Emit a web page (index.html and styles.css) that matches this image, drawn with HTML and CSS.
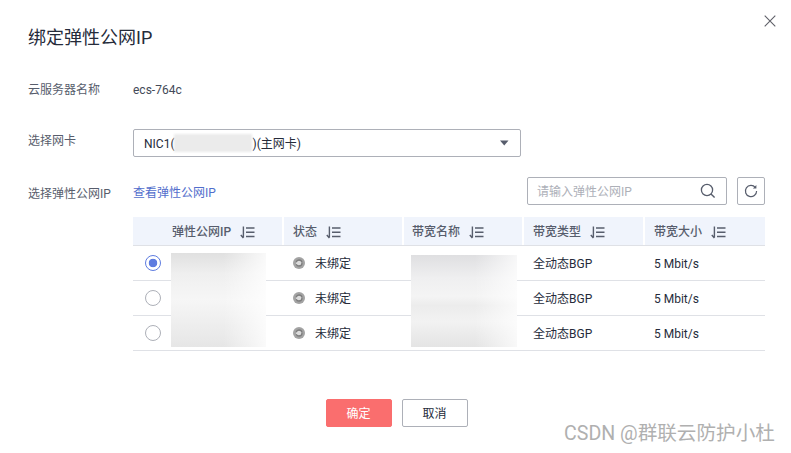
FILE: index.html
```html
<!DOCTYPE html>
<html lang="zh-CN">
<head>
<meta charset="utf-8">
<title>绑定弹性公网IP</title>
<link rel="stylesheet" href="styles.css">
</head>
<body>
<div class="dialog">
  <svg class="close" width="12" height="12" viewBox="0 0 12 12"><path d="M.7.7l10.6 10.6M11.3.7L.7 11.3" stroke="#5f6068" stroke-width="1.1" fill="none"/></svg>
  <h1 class="title">绑定弹性公网IP</h1>
  <div class="row row-name">
    <div class="label">云服务器名称</div>
    <div class="value">ecs-764c</div>
  </div>
  <div class="row row-nic">
    <div class="label label-nic">选择网卡</div>
    <div class="select">
      <span>NIC1(<span class="nic-gap"></span>)(主网卡)</span>
      <svg class="caret" width="9" height="6" viewBox="0 0 9 6"><path d="M0 .5h8.5L4.25 5.5z" fill="#575d6c"/></svg>
      <div class="blur blur-nic"></div>
    </div>
  </div>
  <div class="row row-eip">
    <div class="label label-eip">选择弹性公网IP</div>
    <div class="eip-main">
      <div class="toolbar">
        <a class="link">查看弹性公网IP</a>
        <div class="tools">
          <div class="search">
            <span class="placeholder">请输入弹性公网IP</span>
            <svg class="search-icon" width="16" height="16" viewBox="0 0 16 16"><circle cx="7" cy="7" r="5.6" stroke="#575d6c" stroke-width="1.3" fill="none"/><path d="M11 11l3.6 3.6" stroke="#575d6c" stroke-width="1.4" fill="none"/></svg>
          </div>
          <div class="refresh">
            <svg width="14" height="14" viewBox="0 0 14 14"><path d="M11.4 3.6A5.6 5.6 0 1 0 12.6 7" stroke="#575d6c" stroke-width="1.2" fill="none"/><path d="M12.4 1v3.6H8.9z" fill="#575d6c"/></svg>
          </div>
        </div>
      </div>
      <div class="table">
        <div class="tr th">
          <div class="cell c1">弹性公网IP<svg class="sort" width="15" height="13" viewBox="0 0 15 13"><path d="M3.4 .5v11M.8 9l2.6 3" stroke="#575d6c" stroke-width="1.4" fill="none"/><path d="M6 2h8.5M6 6.2h8.5M6 10.4h8.5" stroke="#575d6c" stroke-width="1.5"/></svg></div>
          <div class="cell">状态<svg class="sort" width="15" height="13" viewBox="0 0 15 13"><path d="M3.4 .5v11M.8 9l2.6 3" stroke="#575d6c" stroke-width="1.4" fill="none"/><path d="M6 2h8.5M6 6.2h8.5M6 10.4h8.5" stroke="#575d6c" stroke-width="1.5"/></svg></div>
          <div class="cell">带宽名称<svg class="sort" width="15" height="13" viewBox="0 0 15 13"><path d="M3.4 .5v11M.8 9l2.6 3" stroke="#575d6c" stroke-width="1.4" fill="none"/><path d="M6 2h8.5M6 6.2h8.5M6 10.4h8.5" stroke="#575d6c" stroke-width="1.5"/></svg></div>
          <div class="cell">带宽类型<svg class="sort" width="15" height="13" viewBox="0 0 15 13"><path d="M3.4 .5v11M.8 9l2.6 3" stroke="#575d6c" stroke-width="1.4" fill="none"/><path d="M6 2h8.5M6 6.2h8.5M6 10.4h8.5" stroke="#575d6c" stroke-width="1.5"/></svg></div>
          <div class="cell">带宽大小<svg class="sort" width="15" height="13" viewBox="0 0 15 13"><path d="M3.4 .5v11M.8 9l2.6 3" stroke="#575d6c" stroke-width="1.4" fill="none"/><path d="M6 2h8.5M6 6.2h8.5M6 10.4h8.5" stroke="#575d6c" stroke-width="1.5"/></svg></div>
        </div>
        <div class="tr">
          <div class="cell c1"><span class="radio radio-on"></span></div>
          <div class="cell"><svg class="status" width="12" height="12" viewBox="0 0 12 12"><circle cx="6" cy="6" r="6" fill="#a3a3a3"/><circle cx="6" cy="6" r="3" stroke="#7d7d7d" stroke-width="1.3" stroke-dasharray="8 2" fill="#dcdcdc"/></svg>未绑定</div>
          <div class="cell"></div>
          <div class="cell">全动态BGP</div>
          <div class="cell">5 Mbit/s</div>
        </div>
        <div class="tr">
          <div class="cell c1"><span class="radio"></span></div>
          <div class="cell"><svg class="status" width="12" height="12" viewBox="0 0 12 12"><circle cx="6" cy="6" r="6" fill="#a3a3a3"/><circle cx="6" cy="6" r="3" stroke="#7d7d7d" stroke-width="1.3" stroke-dasharray="8 2" fill="#dcdcdc"/></svg>未绑定</div>
          <div class="cell"></div>
          <div class="cell">全动态BGP</div>
          <div class="cell">5 Mbit/s</div>
        </div>
        <div class="tr">
          <div class="cell c1"><span class="radio"></span></div>
          <div class="cell"><svg class="status" width="12" height="12" viewBox="0 0 12 12"><circle cx="6" cy="6" r="6" fill="#a3a3a3"/><circle cx="6" cy="6" r="3" stroke="#7d7d7d" stroke-width="1.3" stroke-dasharray="8 2" fill="#dcdcdc"/></svg>未绑定</div>
          <div class="cell"></div>
          <div class="cell">全动态BGP</div>
          <div class="cell">5 Mbit/s</div>
        </div>
        <div class="blur blur-ip"></div>
        <div class="blur blur-band"></div>
      </div>
    </div>
  </div>
  <div class="actions">
    <button class="btn btn-primary">确定</button>
    <button class="btn">取消</button>
  </div>
  <div class="watermark">CSDN @群联云防护小杜</div>
</div>
</body>
</html>
```
FILE: styles.css
```css
* { box-sizing: border-box; }
html, body { margin: 0; padding: 0; background: #fff; }
body {
  width: 791px;
  height: 453px;
  overflow: hidden;
  font-family: Roboto, "Noto Sans CJK SC", sans-serif;
  font-size: 12px;
  line-height: 18px;
  color: #252b3a;
}
.dialog {
  position: relative;
  height: 453px;
  padding: 27px 26px 0 28px;
}
.close { position: absolute; top: 15px; right: 15px; }
.title {
  margin: 0;
  font-size: 18px;
  font-weight: 400;
  line-height: 21px;
  color: #252b3a;
}
.row { display: flex; }
.label { width: 105px; flex: none; color: #575d6c; }
.value { color: #444a58; }
.row-name { margin-top: 33px; }
.row-nic { margin-top: 30px; align-items: flex-start; }
.label-nic { margin-top: 3px; }
.select {
  position: relative;
  width: 388px;
  height: 28px;
  border: 1px solid #adb0b8;
  border-radius: 2px;
  padding: 2px 11px 0 10px;
  display: flex;
  align-items: center;
  justify-content: space-between;
}
.caret { margin-top: -2px; }
.nic-gap { display: inline-block; width: 78px; }
.blur { position: absolute; pointer-events: none; }
.blur-nic {
  left: 40px; top: 4px; width: 78px; height: 18px;
  background: #ebebeb;
  filter: blur(1px);
}
.row-eip { margin-top: 20px; }
.label-eip { margin-top: 8px; }
.eip-main { width: 632px; flex: none; }
.toolbar {
  display: flex;
  justify-content: space-between;
  align-items: center;
  height: 28px;
}
.link { color: #526ecc; margin-top: 4px; }
.tools { display: flex; gap: 10px; }
.search {
  width: 200px;
  height: 28px;
  border: 1px solid #adb0b8;
  border-radius: 2px;
  padding: 2px 10px 0 9px;
  display: flex;
  align-items: center;
  justify-content: space-between;
}
.search-icon { margin-top: -2px; }
.placeholder { color: #adb0b8; }
.refresh {
  width: 28px;
  height: 28px;
  border: 1px solid #adb0b8;
  border-radius: 2px;
  display: flex;
  align-items: center;
  justify-content: center;
}
.table { position: relative; margin-top: 12px; }
.tr {
  display: grid;
  grid-template-columns: 149px 120px 120px 121px 122px;
  height: 35px;
  border-bottom: 1px solid #dfe1e6;
  align-items: center;
}
.th {
  height: 29px;
  background: #f0f4fc;
  color: #575d6c;
  font-weight: 500;
}
.cell {
  display: flex;
  align-items: center;
  padding: 2px 0 0 11px;
  height: 100%;
}
.cell:nth-child(3) { padding-left: 10px; }
.c1 { padding-left: 39px; }
.th .cell + .cell { box-shadow: inset 2px 0 #fff; }
.sort { margin-left: 9px; }
.status { margin: -3px 10px 0 0; }
.radio {
  width: 16px;
  height: 16px;
  margin: -2px 0 0 -27px;
  border: 1px solid #adb0b8;
  border-radius: 50%;
  background: #fff;
}
.radio-on {
  border-color: #5e7ce0;
  background: radial-gradient(circle, #5e7ce0 0 4px, #fff 4.6px);
}
.blur-ip {
  left: 38px; top: 36px; width: 95px; height: 94px;
  background:
    linear-gradient(90deg, transparent 55%, rgba(255,255,255,.8) 100%),
    linear-gradient(180deg, #e0e0e0 0, #efefef 22%, #f6f6f6 50%, #eeeeee 75%, #e6e6e6 100%);
}
.blur-band {
  left: 278px; top: 38px; width: 106px; height: 92px;
  background:
    linear-gradient(90deg, transparent 60%, rgba(255,255,255,.75) 100%),
    linear-gradient(180deg, #dfdfe1 0, #efeff0 25%, #f4f4f4 45%, #ececec 55%, #f2f2f2 72%, #e4e4e4 100%);
}
.actions {
  display: flex;
  justify-content: center;
  gap: 10px;
  margin-top: 48px;
}
.btn {
  width: 66px;
  height: 28px;
  border: 1px solid #adb0b8;
  border-radius: 2px;
  background: #fff;
  color: #252b3a;
  font: inherit;
  padding: 2px 0 0;
}
.btn-primary { background: #fa6e6e; border-color: #fa6e6e; color: #fff; }
.watermark {
  position: absolute;
  left: 564px;
  top: 422px;
  font-size: 19.6px;
  line-height: 24px;
  color: #b0b0b0;
  white-space: nowrap;
}
```
